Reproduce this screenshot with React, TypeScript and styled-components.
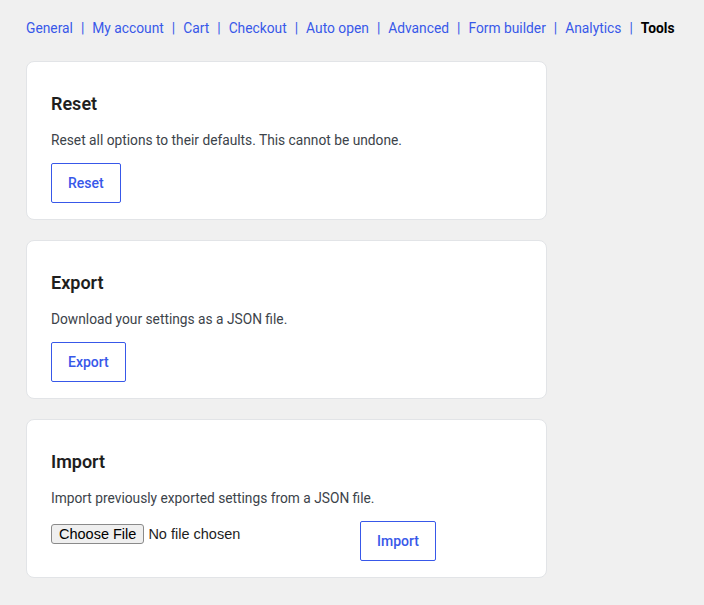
import styled, { createGlobalStyle } from "styled-components";

const GlobalStyle = createGlobalStyle`
  html, body {
    margin: 0;
    padding: 0;
    background: #f0f0f0;
  }
  body {
    font-family: Roboto, "Noto Sans", "Liberation Sans", sans-serif;
    color: #1e1e1e;
  }
`

const Page = styled.div`
  padding: 18px 26px 28px;
  width: 521px;
`

const Nav = styled.nav`
  display: flex;
  align-items: center;
  font-size: 13.8px;
  line-height: 20px;
  white-space: nowrap;
  margin-bottom: 23px;
`

const NavLink = styled.a<{ $active?: boolean }>`
  color: ${(p) => (p.$active ? "#000" : "#3858e9")};
  font-weight: ${(p) => (p.$active ? 700 : 400)};
  text-decoration: none;
  cursor: pointer;
`

const Sep = styled.span`
  color: #3858e9;
  margin: 0 8px;
`

const Stack = styled.div`
  display: flex;
  flex-direction: column;
  gap: 20px;
`

const Card = styled.section`
  background: #fff;
  border: 1px solid #e2e4e7;
  border-radius: 8px;
  padding: 30px 24px 16px;
`

const Title = styled.h2`
  margin: 0 0 14px;
  font-size: 18px;
  line-height: 24px;
  font-weight: 600;
  color: #1e1e1e;
`

const Text = styled.p`
  margin: 0 0 13px;
  font-size: 13.75px;
  line-height: 20px;
  color: #3c434a;
`

const Button = styled.button`
  height: 40px;
  padding: 0 16px;
  background: #fff;
  border: 1px solid #3858e9;
  border-radius: 2px;
  color: #3858e9;
  font-family: inherit;
  font-size: 14px;
  font-weight: 500;
  cursor: pointer;
`

const FileRow = styled.div`
  display: flex;
  align-items: flex-start;
  gap: 56px;
`

const FileInput = styled.input`
  margin-top: 3px;
  width: 253px;
  font-family: "Liberation Sans", Arial, sans-serif;
  font-size: 14.5px;
  color: #1e1e1e;

  &::file-selector-button {
    font-family: inherit;
    font-size: 14.5px;
    background: #efefef;
    border: 1px solid #8a8a8a;
    border-radius: 3px;
    padding: 1px 7px;
    margin-right: 4px;
    color: #000;
  }
`

const tabs = [
  "General",
  "My account",
  "Cart",
  "Checkout",
  "Auto open",
  "Advanced",
  "Form builder",
  "Analytics",
  "Tools",
]

export default function App() {
  return (
    <>
      <GlobalStyle />
      <Page>
        <Nav>
          {tabs.map((t, i) => (
            <span key={t}>
              {i > 0 && <Sep>|</Sep>}
              <NavLink $active={t === "Tools"}>{t}</NavLink>
            </span>
          ))}
        </Nav>
        <Stack>
          <Card>
            <Title>Reset</Title>
            <Text>Reset all options to their defaults. This cannot be undone.</Text>
            <Button>Reset</Button>
          </Card>
          <Card>
            <Title>Export</Title>
            <Text>Download your settings as a JSON file.</Text>
            <Button>Export</Button>
          </Card>
          <Card>
            <Title>Import</Title>
            <Text>Import previously exported settings from a JSON file.</Text>
            <FileRow>
              <FileInput type="file" />
              <Button>Import</Button>
            </FileRow>
          </Card>
        </Stack>
      </Page>
    </>
  )
}
